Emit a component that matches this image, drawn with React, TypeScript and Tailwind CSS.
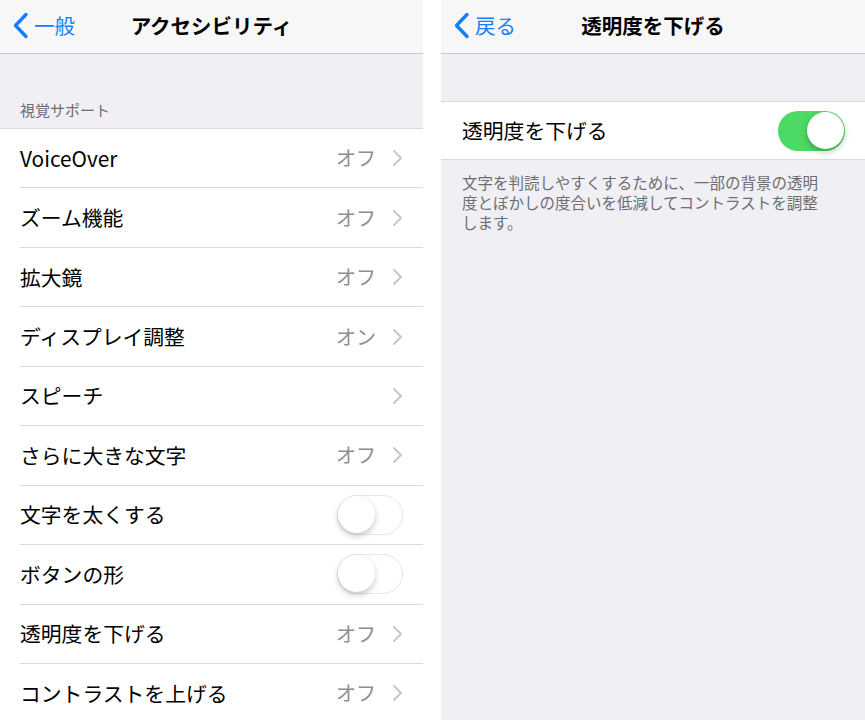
import React from "react";

type Row = { label: string; value?: string; kind: "link" | "toggle" };

const rows: Row[] = [
  { label: "VoiceOver", value: "オフ", kind: "link" },
  { label: "ズーム機能", value: "オフ", kind: "link" },
  { label: "拡大鏡", value: "オフ", kind: "link" },
  { label: "ディスプレイ調整", value: "オン", kind: "link" },
  { label: "スピーチ", kind: "link" },
  { label: "さらに大きな文字", value: "オフ", kind: "link" },
  { label: "文字を太くする", kind: "toggle" },
  { label: "ボタンの形", kind: "toggle" },
  { label: "透明度を下げる", value: "オフ", kind: "link" },
  { label: "コントラストを上げる", value: "オフ", kind: "link" },
];

function BackChevron() {
  return (
    <svg width="17" height="27" viewBox="0 0 17 27" aria-hidden="true">
      <path d="M14 2.5 L3.5 13.5 L14 24.5" fill="none" stroke="#157efb" strokeWidth="3.4" strokeLinecap="round" strokeLinejoin="round" />
    </svg>
  );
}

function RowChevron() {
  return (
    <svg width="11" height="18" viewBox="0 0 11 18" aria-hidden="true">
      <path d="M2 2 L9 9 L2 16" fill="none" stroke="#c7c7cc" strokeWidth="2" strokeLinecap="round" strokeLinejoin="round" />
    </svg>
  );
}

function Toggle({ on }: { on: boolean }) {
  return (
    <div
      className={
        on
          ? "relative h-[40px] w-[67px] rounded-full bg-[#4cd964]"
          : "relative h-[40px] w-[66px] rounded-full border-[1.5px] border-[#e5e5ea] bg-white"
      }
    >
      <div
        className={
          on
            ? "absolute right-[1.5px] top-[1.5px] h-[37px] w-[37px] rounded-full bg-white shadow-[0_3px_6px_rgba(0,0,0,0.25)]"
            : "absolute left-[0px] top-[0px] h-[37px] w-[37px] rounded-full bg-white shadow-[0_3px_6px_rgba(0,0,0,0.22)]"
        }
      />
    </div>
  );
}

function NavBar({ back, title }: { back: string; title: string }) {
  return (
    <div className="relative flex h-[54px] shrink-0 items-center border-b border-[#c8c7cc] bg-[#f7f7f7]">
      <div className="flex items-center gap-[5px] pb-[2px] pl-[12px] text-[20.5px] text-[#157efb]">
        <BackChevron />
        <span className="leading-none">{back}</span>
      </div>
      <div className="pointer-events-none absolute inset-x-0 top-0 flex h-[50px] items-center justify-center text-[20.5px] font-bold text-black">
        {title}
      </div>
    </div>
  );
}

export default function App() {
  return (
    <div className="flex h-[720px] w-[865px] overflow-hidden bg-white font-['Noto_Sans_CJK_JP',sans-serif]">
      <section className="flex w-[423px] shrink-0 flex-col bg-[#efeff4]">
        <NavBar back="一般" title="アクセシビリティ" />
        <div className="flex h-[74px] shrink-0 items-end pb-[7px] pl-[20px] text-[15px] text-[#6d6d72]">視覚サポート</div>
        <div className="flex-1 border-t border-[#d9d9de] bg-white">
          {rows.map((r) => (
            <div key={r.label} className="pl-[20px]">
              <div className="flex h-[59.45px] items-center border-b border-[#d9d9de] pr-[20px]">
                <span className="flex-1 text-[20.8px] text-black">{r.label}</span>
                {r.kind === "toggle" ? (
                  <Toggle on={false} />
                ) : (
                  <div className="flex items-center gap-[16px]">
                    {r.value ? <span className="text-[20px] text-[#8e8e93]">{r.value}</span> : null}
                    <RowChevron />
                  </div>
                )}
              </div>
            </div>
          ))}
        </div>
      </section>

      <div className="w-[18px] shrink-0 bg-white" />

      <section className="flex flex-1 flex-col bg-[#efeff4]">
        <NavBar back="戻る" title="透明度を下げる" />
        <div className="h-[47px] shrink-0" />
        <div className="flex h-[59px] shrink-0 items-center border-y border-[#d9d9de] bg-white pl-[21px] pr-[20px]">
          <span className="flex-1 text-[20.8px] text-black">透明度を下げる</span>
          <Toggle on />
        </div>
        <div className="flex flex-col px-[21px] pt-[12px] text-[15.5px] text-[#6d6d72]">
          <div className="h-[20px] whitespace-nowrap leading-[20px]">文字を判読しやすくするために、一部の背景の透明</div>
          <div className="h-[20px] whitespace-nowrap leading-[20px]">度とぼかしの度合いを低減してコントラストを調整</div>
          <div className="h-[20px] whitespace-nowrap leading-[20px]">します。</div>
        </div>
      </section>
    </div>
  );
}
